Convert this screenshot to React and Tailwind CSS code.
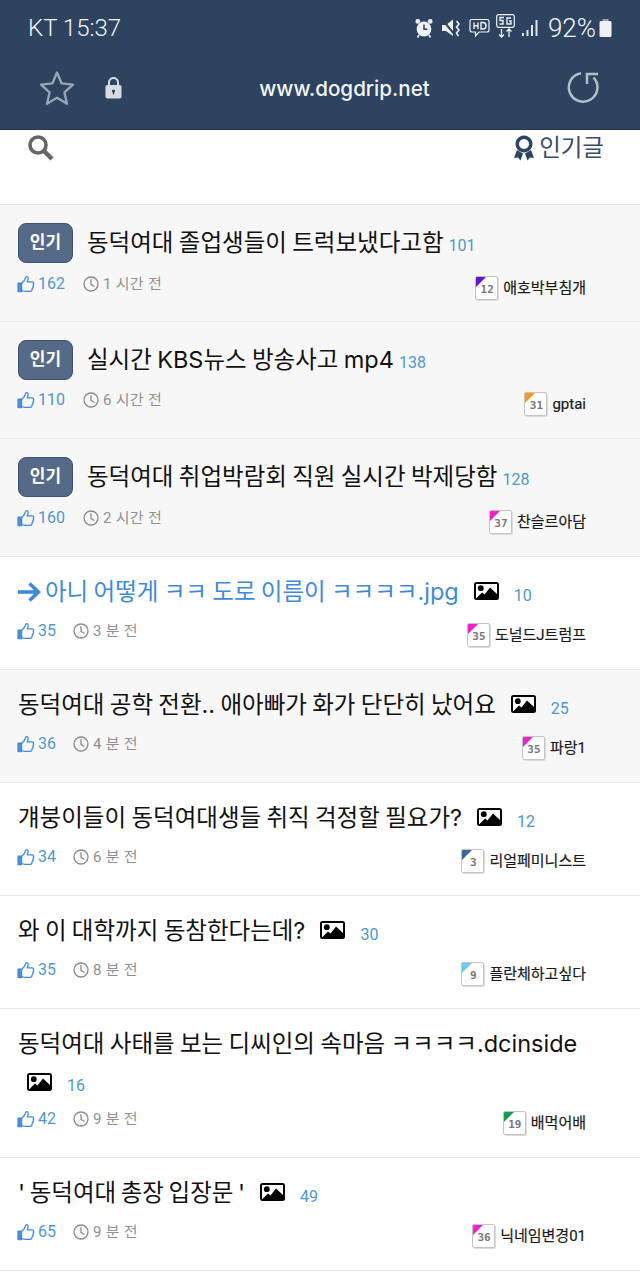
import React from "react";

const FONT = "font-['Roboto','Noto_Sans_CJK_KR',sans-serif]";

function ImgIcon() {
  return (
    <svg width="25" height="18" viewBox="0 0 25 18" className="shrink-0">
      <rect width="25" height="18" rx="2.5" fill="#000" />
      <rect x="2" y="2" width="21" height="14" fill="#fff" />
      <circle cx="6.8" cy="6.2" r="2.9" fill="#000" />
      <path d="M2.5 16 L8 10.5 L10.5 12.5 L16 5.5 L23 12 V16 Z" fill="#000" />
    </svg>
  );
}

function Thumb() {
  return (
    <svg width="18" height="18" viewBox="0 0 18 18" className="-ml-px shrink-0" fill="none">
      <path d="M1 8 H4.6 V16.6 H1Z" fill="#4a90dd" stroke="#3f8ad8" strokeWidth="1.2" strokeLinejoin="round" />
      <path d="M4.8 8.2 C6.6 6.8 8.2 4.8 8.6 2.6 C8.8 1.2 11.2 1 11.2 3.2 C11.2 4.6 10.6 5.8 10.2 6.8 H15.2 C16.6 6.8 17 8.2 16.2 9.2 C16.8 10 16.6 11 15.8 11.6 C16.2 12.6 15.8 13.4 15 13.8 C15.2 15.2 14.4 16.4 13.2 16.4 H8 C6.6 16.4 5.8 15.8 4.8 15.4" stroke="#3f8ad8" strokeWidth="1.3" strokeLinejoin="round" />
    </svg>
  );
}

function Clock() {
  return (
    <svg width="16" height="16" viewBox="0 0 16 16" className="shrink-0" fill="none" stroke="#8a8a8a" strokeWidth="1.3">
      <circle cx="8" cy="8" r="7" />
      <path d="M8 3.6 V8.4 L11 10.2" strokeLinecap="round" />
    </svg>
  );
}

function Level({ n, c }) {
  return (
    <span className="relative flex h-[24px] w-[23px] shrink-0 items-center justify-center overflow-hidden rounded-[2px] border border-[#c4c4c4] bg-white shadow-[1px_1px_0_#ddd]">
      <svg width="12" height="12" viewBox="0 0 12 12" className="absolute -left-px -top-px">
        <path d="M0 0 H12 L0 12Z" fill={c} />
      </svg>
      <span className="relative ml-[1px] mt-[2px] font-['DejaVu_Sans_Mono',monospace] text-[11px] font-bold leading-none text-[#777]">{n}</span>
    </span>
  );
}

function Row({ r }) {
  const bg = r.gray ? "bg-[#f7f7f7]" : "bg-white";
  return (
    <div className={`${bg} ${r.h} border-b border-[#e9e9e9] pl-[18px] pr-[54px]`}>
      <div className={`flex flex-wrap items-center ${r.top}`}>
        {r.badge && (
          <span className="mr-[14px] flex h-[40px] w-[55px] items-center justify-center rounded-[8px] border border-[#3c5273] bg-[#566a87] text-[17px] font-bold text-white">인기</span>
        )}
        {r.arrow && (
          <svg width="23" height="20" viewBox="0 0 23 20" className="mr-[4px] shrink-0" fill="none" stroke="#3f8ad8" strokeWidth="3.6">
            <path d="M0 10 H20" />
            <path d="M11.5 1.5 L20.5 10 L11.5 18.5" />
          </svg>
        )}
        <span className={`font-['Inter','Noto_Sans_CJK_KR',sans-serif] text-[23.5px] leading-[34px] ${r.tight ? "[word-spacing:-2px]" : "[word-spacing:-1.3px]"} ${r.arrow ? "text-[#3f8ad8]" : "text-[#111]"}`}>{r.title}</span>
        {r.img && !r.wrap && <span className={`ml-[15px] ${r.imgm}`}><ImgIcon /></span>}
        {!r.wrap && <span className={`text-[16px] text-[#4f97cd] ${r.img ? "ml-[15px] mt-[8px]" : "ml-[5px] mt-[6px]"}`}>{r.cnt}</span>}
      </div>
      {r.wrap && (
        <div className="mt-[5px] flex items-center pl-[9px]">
          <ImgIcon />
          <span className="ml-[15px] mt-[8px] text-[16px] text-[#4f97cd]">{r.cnt}</span>
        </div>
      )}
      <div className={`flex items-start justify-between ${r.meta}`}>
        <div className="flex items-center text-[16px] leading-[20px]">
          <Thumb />
          <span className="ml-[3px] text-[#4f97cd]">{r.likes}</span>
          <span className={`${r.badge ? "ml-[18px]" : "ml-[17px]"} flex items-center text-[15px] tracking-[0.3px] text-[#909090]`}>
            <Clock />
            <span className="ml-[4px]">{r.time}</span>
          </span>
        </div>
        <div className="mt-[2px] flex items-center">
          <Level n={r.lv} c={r.c} />
          <span className="ml-[5px] text-[15px] leading-[24px] text-[#1a1a1a] [-webkit-text-stroke:0.2px_#1a1a1a]">{r.user}</span>
        </div>
      </div>
    </div>
  );
}

const rows = [
  { badge: true, gray: true, h: "h-[117px]", top: "pt-[18px]", meta: "mt-[11px]", title: "동덕여대 졸업생들이 트럭보냈다고함", cnt: 101, likes: 162, time: "1 시간 전", lv: "12", c: "#6a11cb", user: "애호박부침개" },
  { badge: true, gray: true, h: "h-[117px]", top: "pt-[18px]", meta: "mt-[10px]", title: "실시간 KBS뉴스 방송사고 mp4", cnt: 138, likes: 110, time: "6 시간 전", lv: "31", c: "#f39a1d", user: "gptai" },
  { badge: true, gray: true, h: "h-[118px]", top: "pt-[18px]", meta: "mt-[11px]", title: "동덕여대 취업박람회 직원 실시간 박제당함", cnt: 128, likes: 160, time: "2 시간 전", lv: "37", c: "#ee22c8", user: "찬슬르아담" },
  { arrow: true, img: true, imgm: "-mt-[3px]", h: "h-[113px]", top: "pt-[18px]", meta: "mt-[12px]", title: "아니 어떻게 ㅋㅋ 도로 이름이 ㅋㅋㅋㅋ.jpg", cnt: 10, likes: 35, time: "3 분 전", lv: "35", c: "#ee22c8", user: "도널드J트럼프" },
  { gray: true, img: true, imgm: "-mt-[3px]", h: "h-[113px]", top: "pt-[18px]", meta: "mt-[12px]", title: "동덕여대 공학 전환.. 애아빠가 화가 단단히 났어요", cnt: 25, likes: 36, time: "4 분 전", lv: "35", c: "#ee22c8", user: "파랑1" },
  { img: true, imgm: "-mt-[3px]", h: "h-[113px]", top: "pt-[18px]", meta: "mt-[12px]", title: "걔붕이들이 동덕여대생들 취직 걱정할 필요가?", cnt: 12, likes: 34, time: "6 분 전", lv: "3", c: "#34689f", user: "리얼페미니스트" },
  { img: true, imgm: "-mt-[3px]", h: "h-[113px]", top: "pt-[18px]", meta: "mt-[12px]", title: "와 이 대학까지 동참한다는데?", cnt: 30, likes: 35, time: "8 분 전", lv: "9", c: "#6ecbf0", user: "플란체하고싶다" },
  { wrap: true, h: "h-[149px]", top: "pt-[18px]", meta: "mt-[11px]", title: "동덕여대 사태를 보는 디씨인의 속마음 ㅋㅋㅋㅋ.dcinside", cnt: 16, likes: 42, time: "9 분 전", lv: "19", c: "#159a56", user: "배먹어배" },
  { img: true, tight: true, imgm: "-mt-[3px]", h: "h-[113px]", top: "pt-[18px]", meta: "mt-[12px]", title: "' 동덕여대 총장 입장문 '", cnt: 49, likes: 65, time: "9 분 전", lv: "36", c: "#ee22c8", user: "닉네임변경01" },
];

export default function App() {
  return (
    <div className={`${FONT} h-[1280px] w-[640px] overflow-hidden bg-white`}>
      <header className="h-[130px] border-b border-[#26384f] bg-[#2e4360] text-white">
        <div className="flex h-[55px] items-center justify-between pl-[28px] pr-[28px]">
          <span className="text-[24px] font-light text-[#f2f4f7]">KT 15:37</span>
          <div className="flex items-center">
            <svg width="18" height="20" viewBox="0 0 18 20" fill="#eef1f5">
              <circle cx="9" cy="11" r="7.4" />
              <circle cx="2.8" cy="3.4" r="2.4" />
              <circle cx="15.2" cy="3.4" r="2.4" />
              <path d="M9 6.5 V11.3 H12.4" stroke="#2e4360" strokeWidth="1.5" fill="none" />
              <path d="M4 17 L2.5 19.5 M14 17 L15.5 19.5" stroke="#eef1f5" strokeWidth="1.6" />
            </svg>
            <svg width="18" height="18" viewBox="0 0 18 18" className="ml-[9px]" fill="#eef1f5">
              <path d="M0 6 H4 L11 0.5 V17 L4 12 H0Z" />
              <path d="M0.5 1 L13 16" stroke="#2e4360" strokeWidth="2" />
              <path d="M14.5 2 L17 5 L14.5 8 L17 11 L14.5 14 L16.5 17" stroke="#eef1f5" strokeWidth="1.6" fill="none" />
            </svg>
            <svg width="21" height="20" viewBox="0 0 21 20" className="ml-[9px]" fill="none" stroke="#eef1f5" strokeWidth="1.2">
              <path d="M3 1.5 H18 Q20 1.5 20 3.5 V12 Q20 14 18 14 H10 L6.5 18 V14 H3 Q1 14 1 12 V3.5 Q1 1.5 3 1.5Z" />
              <path d="M5 4.5 V11 M9 4.5 V11 M5 7.7 H9 M12 4.5 V11 H14 Q17 11 17 7.7 Q17 4.5 14 4.5Z" strokeWidth="1.4" />
            </svg>
            <svg width="19" height="24" viewBox="0 0 19 24" className="ml-[6px] -mt-[4px]" fill="none" stroke="#eef1f5">
              <rect x="0.7" y="0.7" width="17.6" height="12.6" rx="2" strokeWidth="1.2" />
              <path d="M8 3.5 H4 V6.5 H7 V10 H3.5 M15 4 H11 V10 H15 V7 H13" strokeWidth="1.4" />
              <path d="M5.5 15 V23 M3 20.5 L5.5 23 L8 20.5 M13 23 V15 M10.5 17.5 L13 15 L15.5 17.5" strokeWidth="1.3" />
            </svg>
            <svg width="16" height="18" viewBox="0 0 16 18" className="ml-[7px]" fill="#dfe4ea">
              <rect x="0" y="14" width="2" height="3" />
              <rect x="4.5" y="11" width="2" height="6" />
              <rect x="9" y="6" width="2" height="11" />
              <rect x="13.5" y="1" width="2" height="16" />
            </svg>
            <span className="ml-[10px] text-[26px] font-light leading-none text-[#f2f4f7]">92%</span>
            <svg width="13" height="18" viewBox="0 0 13 18" className="ml-[3px]" fill="#eef1f5">
              <rect x="3.5" y="0" width="6" height="2" fill="#9aa5b4" />
              <rect x="0.5" y="2" width="12" height="16" rx="1.5" />
            </svg>
          </div>
        </div>
        <div className="flex h-[75px] items-start pl-[39px] pr-[41px]">
          <svg width="36" height="36" viewBox="0 0 36 36" className="mt-[15px] shrink-0" fill="none" stroke="#98a5b6" strokeWidth="2.4" strokeLinejoin="round">
            <path d="M18 2.5 L22.6 13.4 L34 14.6 L25.4 22.4 L28 33.8 L18 27.8 L8 33.8 L10.6 22.4 L2 14.6 L13.4 13.4Z" />
          </svg>
          <svg width="17" height="23" viewBox="0 0 17 23" className="ml-[30px] mt-[21px] shrink-0">
            <path d="M4 10 V6.5 C4 0.5 13 0.5 13 6.5 V10" fill="none" stroke="#d7dce3" strokeWidth="2" />
            <rect x="0.5" y="9" width="16" height="13.5" rx="2" fill="#d7dce3" />
            <circle cx="8.5" cy="15" r="1.6" fill="#2e4360" />
            <rect x="7.8" y="15" width="1.4" height="3.4" fill="#2e4360" />
          </svg>
          <span className="mt-[19px] flex-1 text-center font-['Inter',sans-serif] text-[20.6px] font-medium leading-[30px] text-[#f4f6f8]">www.dogdrip.net</span>
          <svg width="32" height="34" viewBox="0 0 32 34" className="mt-[15px] shrink-0" fill="none" stroke="#b4bfcc" strokeWidth="2.5">
            <path d="M14 3.2 A14.3 14.3 0 1 0 26.5 7.5" />
            <path d="M31 4 H20 V14" />
          </svg>
        </div>
      </header>

      <div className="flex h-[75px] items-start justify-between border-b border-[#e9e9e9] pl-[27px] pr-[36px]">
        <svg width="28" height="28" viewBox="0 0 28 28" className="mt-[4px]" fill="none" stroke="#666" >
          <circle cx="11" cy="11" r="8" strokeWidth="3.6" />
          <path d="M16.5 16.5 L25 25" strokeWidth="4.4" />
        </svg>
        <div className="flex items-start">
          <svg width="20" height="26" viewBox="0 0 20 26" className="mt-[5px]" fill="#2e4360">
            <path d="M10 0.5 A8.5 8.5 0 1 1 9.99 0.5Z M10 4 A5 5 0 1 0 10.01 4Z" fillRule="evenodd" />
            <path d="M3 15 L0 23 L4 22.5 L6.5 25.5 L9 18.5 Z M17 15 L20 23 L16 22.5 L13.5 25.5 L11 18.5Z" />
          </svg>
          <span className="ml-[5px] text-[23.5px] leading-[36px] text-[#3a4d68]">인기글</span>
        </div>
      </div>

      {rows.map((r) => (
        <Row key={r.title} r={r} />
      ))}
    </div>
  );
}
